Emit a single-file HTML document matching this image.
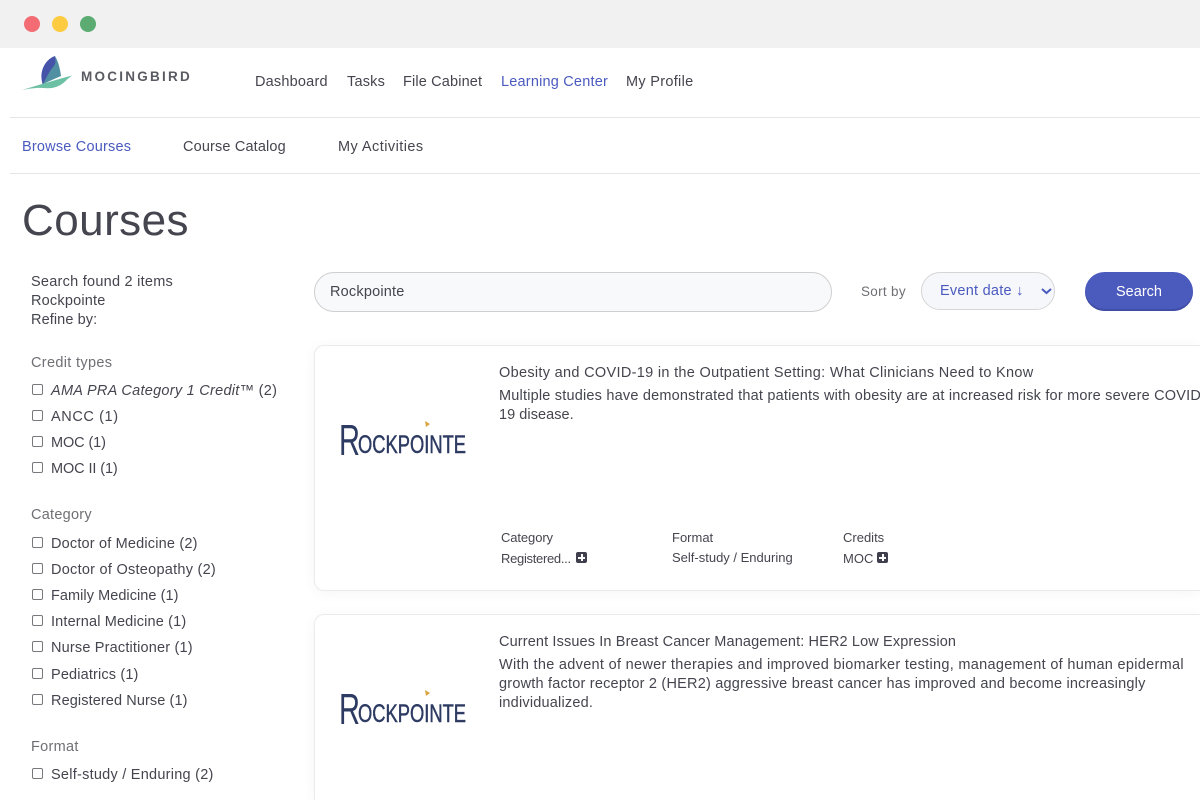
<!DOCTYPE html>
<html><head><meta charset="utf-8"><title>Courses</title>
<style>
html,body{margin:0;padding:0;background:#fff;width:1200px;height:800px;overflow:hidden}
#p{width:1200px;height:800px;overflow:hidden;position:relative;font-family:"Liberation Sans",sans-serif;color:#45454f;font-size:14.5px}
.t{position:absolute;white-space:nowrap;line-height:20px;height:20px;margin-top:2px}
.a{position:absolute}
.cb{position:absolute;left:32px;width:9px;height:9px;border:1px solid #77777c;border-radius:2px;background:#fff}
.g{color:#6f6f75}
.s{font-size:13px}
.plus{position:absolute;width:11px;height:11px;background:#3f3f4e;border-radius:2px}
.plus:before{content:"";position:absolute;left:2px;top:4.5px;width:7px;height:2px;background:#fff}
.plus:after{content:"";position:absolute;left:4.5px;top:2px;width:2px;height:7px;background:#fff}
.card{position:absolute;left:314px;width:886px;background:#fff;border:1px solid #ebebeb;border-right:none;border-radius:10px 0 0 10px;box-sizing:border-box;box-shadow:0 2px 14px rgba(0,0,0,.045)}
</style></head><body><div id="p">
<div class="a" style="left:0;top:0;width:1200px;height:48px;background:#f1f1f1"></div>
<div class="a" style="left:24px;top:16px;width:16px;height:16px;border-radius:50%;background:#f46c73"></div>
<div class="a" style="left:52px;top:16px;width:16px;height:16px;border-radius:50%;background:#fdcb40"></div>
<div class="a" style="left:80px;top:16px;width:16px;height:16px;border-radius:50%;background:#5bab72"></div>

<svg class="a" style="left:15px;top:50px" width="70" height="45" viewBox="15 50 70 45">
<path d="M22 90L42 84L61 78.5L72 75.5L67 79.5C63 84 58 87 52 88C46 88.6 41 87.6 36 88C31 88.4 27 89 22 90Z" fill="#6cc0a4"/>
<path d="M42.5 84C41 78 41 73 43 68C45 63 49 58 55 56C56 60 56 64 54 67C51 71 49 76 47 82Z" fill="#4553a8"/>
<path d="M55 56C58 61 60 68 61 76L53 79.5L43 84C46 78 49 72 53 67C56 64 56 60 55 56Z" fill="#5090a2"/>
</svg>
<div class="t" style="left:81px;top:65px;font-size:13.5px;font-weight:bold;letter-spacing:2.25px;color:#5a5a62">MOCINGBIRD</div>

<div class="t" style="left:255px;top:70px;letter-spacing:.2px">Dashboard</div>
<div class="t" style="left:347px;top:70px;letter-spacing:.2px">Tasks</div>
<div class="t" style="left:403px;top:70px;letter-spacing:.15px">File Cabinet</div>
<div class="t" style="left:501px;top:70px;color:#4a5abf;letter-spacing:.2px">Learning Center</div>
<div class="t" style="left:626px;top:70px;letter-spacing:.3px">My Profile</div>
<div class="a" style="left:10px;top:117px;width:1190px;height:1px;background:#e6e6e6"></div>

<div class="t" style="left:22px;top:135px;color:#4a5abf;letter-spacing:.2px">Browse Courses</div>
<div class="t" style="left:183px;top:135px;letter-spacing:.15px">Course Catalog</div>
<div class="t" style="left:338px;top:135px;letter-spacing:.45px">My Activities</div>
<div class="a" style="left:10px;top:173px;width:1190px;height:1px;background:#e6e6e6"></div>

<div class="t" style="left:22px;top:193px;height:52px;line-height:52px;font-size:44px;color:#45454f;letter-spacing:.45px">Courses</div>

<div class="t" style="left:31px;top:270px;letter-spacing:.25px">Search found 2 items</div>
<div class="t" style="left:31px;top:289px;letter-spacing:.2px">Rockpointe</div>
<div class="t" style="left:31px;top:308px;letter-spacing:.1px">Refine by:</div>

<div class="t g" style="left:31px;top:351px;letter-spacing:.33px">Credit types</div>
<div class="cb" style="top:384px"></div><div class="t" style="left:51px;top:379px;letter-spacing:.27px"><i>AMA PRA Category 1 Credit™</i> (2)</div>
<div class="cb" style="top:410px"></div><div class="t" style="left:51px;top:405px;letter-spacing:.6px">ANCC (1)</div>
<div class="cb" style="top:436px"></div><div class="t" style="left:51px;top:431px;letter-spacing:-.1px">MOC (1)</div>
<div class="cb" style="top:462px"></div><div class="t" style="left:51px;top:457px;letter-spacing:-.1px">MOC II (1)</div>

<div class="t g" style="left:31px;top:503px;letter-spacing:.25px">Category</div>
<div class="cb" style="top:537px"></div><div class="t" style="left:51px;top:532px;letter-spacing:.18px">Doctor of Medicine (2)</div>
<div class="cb" style="top:563px"></div><div class="t" style="left:51px;top:558px;letter-spacing:.26px">Doctor of Osteopathy (2)</div>
<div class="cb" style="top:589px"></div><div class="t" style="left:51px;top:584px;letter-spacing:.05px">Family Medicine (1)</div>
<div class="cb" style="top:615px"></div><div class="t" style="left:51px;top:610px;letter-spacing:.15px">Internal Medicine (1)</div>
<div class="cb" style="top:641px"></div><div class="t" style="left:51px;top:636px;letter-spacing:.18px">Nurse Practitioner (1)</div>
<div class="cb" style="top:668px"></div><div class="t" style="left:51px;top:663px;letter-spacing:.15px">Pediatrics (1)</div>
<div class="cb" style="top:694px"></div><div class="t" style="left:51px;top:689px;letter-spacing:.1px">Registered Nurse (1)</div>

<div class="t g" style="left:31px;top:735px;letter-spacing:.3px">Format</div>
<div class="cb" style="top:768px"></div><div class="t" style="left:51px;top:763px;letter-spacing:.25px">Self-study / Enduring (2)</div>

<div class="a" style="left:314px;top:272px;width:518px;height:40px;box-sizing:border-box;border:1px solid #cfcfcf;border-radius:20px;background:#f8f9fb"></div>
<div class="t" style="left:330px;top:280px;letter-spacing:.2px">Rockpointe</div>
<div class="t g" style="left:861px;top:280px;font-size:13.5px;letter-spacing:.3px">Sort by</div>
<div class="a" style="left:921px;top:272px;width:134px;height:38px;box-sizing:border-box;border:1px solid #d5d5d5;border-radius:19px;background:#f6f7fb"></div>
<div class="t" style="left:940px;top:279px;color:#4a5abf;letter-spacing:.25px">Event date ↓</div>
<svg class="a" style="left:1040px;top:287px" width="13" height="8" viewBox="0 0 13 8"><path d="M2 2L6.5 6L11 2" fill="none" stroke="#4a5abf" stroke-width="2"/></svg>
<div class="a" style="left:1085px;top:272px;width:108px;height:39px;border-radius:20px;background:#4b5abd;box-shadow:inset 0 -2px 0 #3f4da5"></div>
<div class="t" style="left:1085px;width:108px;text-align:center;top:280px;color:#fff">Search</div>

<div class="card" style="top:345px;height:246px"></div>
<svg class="a" style="left:335px;top:415px" width="140" height="50" viewBox="0 0 140 50">
<path d="M90 6L95 9L91 12Z" fill="#d9a441"/>
<text x="4" y="40" font-family="Liberation Sans,sans-serif" font-size="44" fill="#2d3a62" textLength="21" lengthAdjust="spacingAndGlyphs">R</text>
<text x="23" y="38" font-family="Liberation Sans,sans-serif" font-size="25" fill="#2d3a62" stroke="#2d3a62" stroke-width=".5" textLength="108" lengthAdjust="spacingAndGlyphs">OCKPOINTE</text>
</svg>
<div class="t" style="left:499px;top:361px;letter-spacing:.31px">Obesity and COVID-19 in the Outpatient Setting: What Clinicians Need to Know</div>
<div class="t" style="left:499px;top:384px;letter-spacing:.2px;width:701px;overflow:hidden">Multiple studies have demonstrated that patients with obesity are at increased risk for more severe COVID-</div>
<div class="t" style="left:499px;top:403px;letter-spacing:.05px">19 disease.</div>
<div class="t s" style="left:501px;top:526px;letter-spacing:-.1px">Category</div>
<div class="t s" style="left:501px;top:547px;letter-spacing:-.3px">Registered...</div><div class="plus" style="left:576px;top:552px"></div>
<div class="t s" style="left:672px;top:526px">Format</div>
<div class="t s" style="left:672px;top:546px">Self-study / Enduring</div>
<div class="t s" style="left:843px;top:526px">Credits</div>
<div class="t s" style="left:843px;top:547px">MOC</div><div class="plus" style="left:877px;top:552px"></div>

<div class="card" style="top:614px;height:186px;border-bottom:none;border-radius:10px 0 0 0"></div>
<svg class="a" style="left:335px;top:684px" width="140" height="50" viewBox="0 0 140 50">
<path d="M90 6L95 9L91 12Z" fill="#d9a441"/>
<text x="4" y="40" font-family="Liberation Sans,sans-serif" font-size="44" fill="#2d3a62" textLength="21" lengthAdjust="spacingAndGlyphs">R</text>
<text x="23" y="38" font-family="Liberation Sans,sans-serif" font-size="25" fill="#2d3a62" stroke="#2d3a62" stroke-width=".5" textLength="108" lengthAdjust="spacingAndGlyphs">OCKPOINTE</text>
</svg>
<div class="t" style="left:499px;top:630px;letter-spacing:.13px">Current Issues In Breast Cancer Management: HER2 Low Expression</div>
<div class="t" style="left:499px;top:653px;letter-spacing:.3px">With the advent of newer therapies and improved biomarker testing, management of human epidermal</div>
<div class="t" style="left:499px;top:672px;letter-spacing:.21px">growth factor receptor 2 (HER2) aggressive breast cancer has improved and become increasingly</div>
<div class="t" style="left:499px;top:691px;letter-spacing:.2px">individualized.</div>
</div></body></html>
